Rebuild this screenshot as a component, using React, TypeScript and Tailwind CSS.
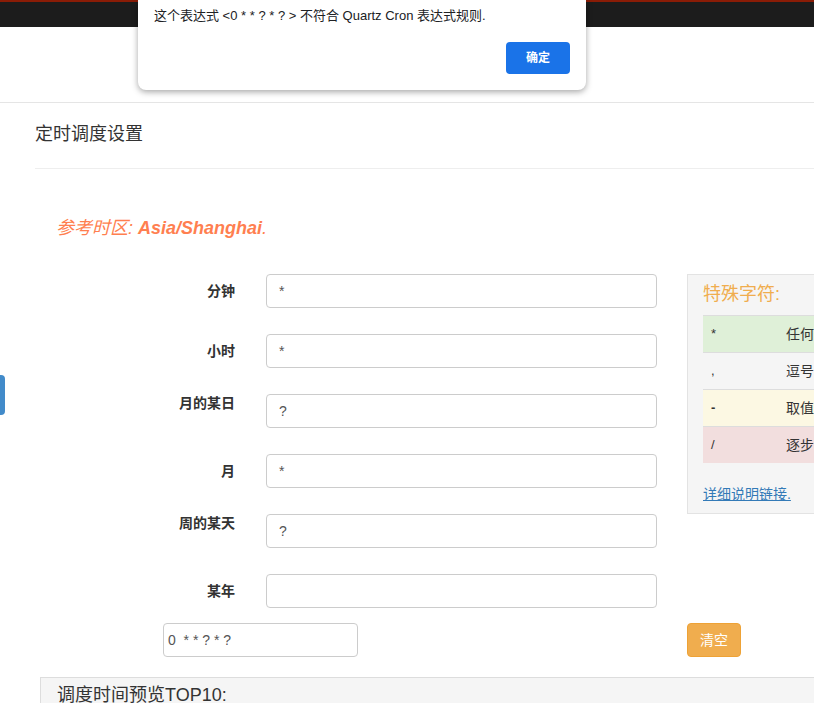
const CAMPOS: { etiqueta: string; valor: string; alta?: boolean }[] = [
  { etiqueta: '分钟', valor: '*' },
  { etiqueta: '小时', valor: '*' },
  { etiqueta: '月的某日', valor: '?', alta: true },
  { etiqueta: '月', valor: '*' },
  { etiqueta: '周的某天', valor: '?', alta: true },
  { etiqueta: '某年', valor: '' },
];

const ESPECIALES = [
  { simbolo: '*', texto: '任何值', fondo: 'bg-[#dff0d8]', negrita: false },
  { simbolo: ',', texto: '逗号分隔多个值', fondo: '', negrita: false },
  { simbolo: '-', texto: '取值范围', fondo: 'bg-[#fcf8e3]', negrita: true },
  { simbolo: '/', texto: '逐步递增', fondo: 'bg-[#f2dede]', negrita: false },
];

export default function App() {
  return (
    <div className="relative h-[703px] w-[814px] overflow-hidden bg-white font-['Liberation_Sans','Noto_Sans_CJK_SC',sans-serif] text-[14px] text-[#333]">
      <div className="h-[27px] border-t-2 border-[#8a1c06] bg-[#1c1c1c]" />
      <div className="h-[76px] border-b border-[#e5e5e5]" />

      <div className="pl-[35px]">
        <div className="h-[66px] w-[1000px] border-b border-[#eee] pt-[19px] text-[18px] leading-[24px]">
          定时调度设置
        </div>
      </div>

      <p className="mt-[47px] pl-[56px] text-[18px] leading-[24px] italic text-[#ff7f50]">
        参考时区: <b>Asia/Shanghai</b>.
      </p>

      <div className="mt-[34px] flex">
        <div className="flex w-[687px] shrink-0 flex-col gap-[26px]">
          {CAMPOS.map((c) => (
            <div key={c.etiqueta} className="flex items-start gap-[31px]">
              <label
                className={
                  'w-[235px] text-right text-[14px] leading-[20px] font-bold ' +
                  (c.alta ? '-mt-[1px]' : 'mt-[7px]')
                }
              >
                {c.etiqueta}
              </label>
              <div className="flex h-[34px] w-[391px] items-center rounded border border-[#ccc] px-[12px] text-[14px] text-[#555]">
                {c.valor}
              </div>
            </div>
          ))}
        </div>

        <div className="h-[240px] w-[320px] shrink-0 border border-[#e3e3e3] bg-[#f5f5f5] px-[15px] pt-[7px]">
          <h3 className="text-[18px] leading-[24px] text-[#f0ad4e]">特殊字符:</h3>
          <div className="mt-[9px]">
            {ESPECIALES.map((e) => (
              <div key={e.simbolo} className={'flex h-[37px] items-center border-t border-[#ddd] ' + e.fondo}>
                <span className={'w-[83px] pl-[8px] text-[13px] ' + (e.negrita ? 'font-bold' : '')}>{e.simbolo}</span>
                <span className="text-[14px] whitespace-nowrap">{e.texto}</span>
              </div>
            ))}
          </div>
          <a className="mt-[21px] block text-[14px] text-[#337ab7] underline">详细说明链接.</a>
        </div>
      </div>

      <div className="mt-[15px] flex items-center">
        <div className="w-[687px] shrink-0 pl-[163px]">
          <div className="flex h-[34px] w-[195px] items-center rounded border border-[#ccc] px-[4px] text-[14px] whitespace-pre text-[#555]">
            {'0  * * ? * ?'}
          </div>
        </div>
        <button className="h-[34px] w-[54px] shrink-0 rounded border border-[#eea236] bg-[#f0ad4e] text-[14px] text-white">
          清空
        </button>
      </div>

      <div className="mt-[20px] ml-[40px] h-[60px] w-[900px] border border-[#ddd] bg-[#f5f5f5] pt-[5px] pl-[16px] text-[18px] leading-[24px]">
        调度时间预览TOP10:
      </div>

      <div className="absolute top-[375px] left-0 h-[40px] w-[5px] rounded-r bg-[#428bca]" />

      <div className="absolute top-0 left-[138px] h-[90px] w-[448px] rounded-b-lg bg-white shadow-[0_2px_6px_rgba(0,0,0,0.35)]">
        <p className="pt-[7px] pl-[16px] text-[13px] leading-[18px] text-[#202124]">
          这个表达式 &lt;0 * * ? * ? &gt; 不符合 Quartz Cron 表达式规则.
        </p>
        <div className="mt-[17px] flex justify-end pr-[16px]">
          <button className="h-[32px] w-[64px] rounded bg-[#1a73e8] text-[12px] font-semibold text-white">确定</button>
        </div>
      </div>
    </div>
  );
}
